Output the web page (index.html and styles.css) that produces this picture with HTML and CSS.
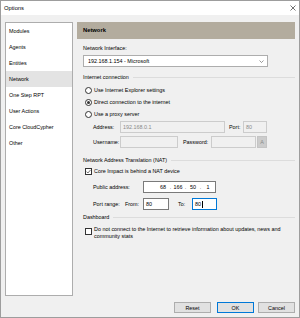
FILE: index.html
```html
<!DOCTYPE html>
<html lang="en">
<head>
    <meta charset="UTF-8">
    <title>Options</title>
    <link rel="stylesheet" href="styles.css">
</head>
<body>
    <div class="window">
        <div class="titlebar">
            <span>Options</span>
            <svg class="close" width="6" height="6" viewBox="0 0 6 6"><path d="M0.5 0.5L5.5 5.5M5.5 0.5L0.5 5.5" stroke="#333" stroke-width="0.7"/></svg>
        </div>

        <div class="main">
            <ul class="nav">
                <li>Modules</li>
                <li>Agents</li>
                <li>Entities</li>
                <li class="active">Network</li>
                <li>One Step RPT</li>
                <li>User Actions</li>
                <li>Core CloudCypher</li>
                <li>Other</li>
            </ul>

            <div class="panel">
                <div class="panel-head">Network</div>
                <div class="panel-body">
                    <div class="caption">Network Interface:</div>
                    <div class="select">
                        <span>192.168.1.154 - Microsoft</span>
                        <svg width="5" height="3" viewBox="0 0 5 3"><path d="M0.5 0.5L2.5 2.5L4.5 0.5" fill="none" stroke="#555" stroke-width="0.6"/></svg>
                    </div>

                    <div class="legend">Internet connection</div>
                    <div class="option first"><span class="radio"></span>Use Internet Explorer settings</div>
                    <div class="option"><span class="radio on"></span>Direct connection to the internet</div>
                    <div class="option"><span class="radio"></span>Use a proxy server</div>

                    <div class="row proxy-row">
                        <span class="lbl w27">Address:</span>
                        <span class="input disabled w105">192.168.0.1</span>
                        <span class="lbl port-lbl">Port:</span>
                        <span class="input disabled w24">80</span>
                    </div>
                    <div class="row user-row">
                        <span class="lbl w27">Username:</span>
                        <span class="input disabled w58"></span>
                        <span class="lbl pass-lbl">Password:</span>
                        <span class="input disabled w45"></span>
                        <span class="mini-btn">A</span>
                    </div>

                    <div class="legend nat">Network Address Translation (NAT)</div>
                    <div class="option check-row">
                        <span class="checkbox"><svg width="5" height="5" viewBox="0 0 5 5"><path d="M0.5 2.6L1.9 4L4.6 0.9" fill="none" stroke="#333" stroke-width="0.7"/></svg></span>
                        Core Impact is behind a NAT device
                    </div>

                    <div class="row public-row">
                        <span class="lbl w50">Public address:</span>
                        <span class="input ip">
                            <span>68</span><i>.</i><span>166</span><i>.</i><span>50</span><i>.</i><span>1</span>
                        </span>
                    </div>
                    <div class="row range-row">
                        <span class="lbl w32">Port range:</span>
                        <span class="lbl w18">From:</span>
                        <span class="input w26">80</span>
                        <span class="lbl to-lbl">To:</span>
                        <span class="input focus w25">80<b class="caret"></b></span>
                    </div>

                    <div class="legend dash">Dashboard</div>
                    <div class="option multi"><span class="checkbox"></span><span>Do not connect to the Internet to retrieve information about updates, news and<br>community stats</span></div>
                </div>
            </div>
        </div>

        <div class="footer">
            <button class="reset">Reset</button>
            <button class="ok">OK</button>
            <button>Cancel</button>
        </div>
    </div>
</body>
</html>
```

FILE: styles.css
```css
* {
    margin: 0;
    padding: 0;
    box-sizing: border-box;
}

body {
    font-family: "Liberation Sans", Arial, sans-serif;
    font-size: 5.4px;
    color: #000;
    background: #fff;
}

.window {
    width: 300px;
    height: 318px;
    border: 1px solid #9d9d9d;
    background: #f0f0f0;
    display: flex;
    flex-direction: column;
}

.titlebar {
    height: 14px;
    background: #fff;
    display: flex;
    align-items: center;
    justify-content: space-between;
    padding: 0 3px 0 3px;
    font-size: 5.8px;
}

.main {
    display: flex;
    gap: 4px;
    padding: 7px 4px 0 4px;
}

.nav {
    width: 68px;
    height: 274px;
    background: #fff;
    border: 1px solid #adadad;
    list-style: none;
}

.nav li {
    height: 16px;
    line-height: 16px;
    padding-left: 3px;
}

.nav li.active {
    background: #e3e3e3;
}

.panel {
    flex: 1;
}

.panel-head {
    height: 17px;
    line-height: 17px;
    background: #b3ac9e;
    padding-left: 6px;
    font-weight: bold;
    font-size: 5.8px;
}

.panel-body {
    padding-left: 6px;
    display: flex;
    flex-direction: column;
}

.caption {
    margin-top: 6px;
    line-height: 7px;
}

.select {
    margin-top: 3px;
    width: 185px;
    height: 12px;
    background: #fff;
    border: 1px solid #adadad;
    display: flex;
    align-items: center;
    justify-content: space-between;
    padding: 0 3px 0 4px;
}

.legend {
    margin-top: 7px;
    display: flex;
    align-items: center;
    line-height: 7px;
}

.legend::after {
    content: "";
    flex: 1;
    height: 1px;
    background: #dcdcdc;
    margin-left: 4px;
}

.legend.nat {
    margin-top: 9px;
}

.legend.dash {
    margin-top: 4px;
}

.option {
    height: 12px;
    display: flex;
    align-items: center;
    gap: 2px;
    padding-left: 2px;
}

.option.first {
    margin-top: 3px;
}

.radio {
    width: 7px;
    height: 7px;
    border: 1px solid #333;
    border-radius: 50%;
    background: #fff;
    display: flex;
    align-items: center;
    justify-content: center;
}

.radio.on::after {
    content: "";
    width: 3px;
    height: 3px;
    border-radius: 50%;
    background: #333;
}

.checkbox {
    width: 7px;
    height: 7px;
    border: 0.8px solid #333;
    background: #fff;
    display: flex;
    align-items: center;
    justify-content: center;
    flex-shrink: 0;
}

.check-row {
    margin-top: 1px;
}

.multi {
    margin-top: 5px;
    height: auto;
    align-items: flex-start;
    line-height: 7px;
}

.multi .checkbox {
    margin-top: 2px;
}

.row {
    display: flex;
    align-items: center;
    height: 12px;
    padding-left: 10px;
}

.proxy-row {
    margin-top: 1px;
}

.user-row {
    margin-top: 3px;
}

.public-row {
    margin-top: 4px;
}

.range-row {
    margin-top: 5px;
}

.lbl {
    flex-shrink: 0;
    white-space: nowrap;
}

.w18 { width: 18px; }
.w27 { width: 27px; }
.w32 { width: 32px; }
.w50 { width: 50px; }

.port-lbl {
    margin-left: 4px;
    width: 14px;
}

.pass-lbl {
    margin-left: 5px;
    width: 28px;
}

.to-lbl {
    margin-left: 9px;
    width: 14px;
}

.input {
    height: 12px;
    background: #fff;
    border: 1px solid #7a7a7a;
    padding-left: 2px;
    display: flex;
    align-items: center;
}

.input.disabled {
    background: #f0f0f0;
    border-color: #cccccc;
    color: #8a8a8a;
}

.input.focus {
    border-color: #0078d7;
}

.caret {
    width: 0.7px;
    height: 7px;
    background: #000;
    margin-left: 0.5px;
}

.w24 { width: 24px; }
.w25 { width: 25px; }
.w26 { width: 26px; }
.w45 { width: 45px; }
.w58 { width: 58px; }
.w105 { width: 105px; }

.ip {
    width: 73px;
    padding-left: 14px;
}

.ip span {
    width: 10px;
    text-align: center;
}

.ip i {
    font-style: normal;
    width: 5px;
    text-align: center;
}

.mini-btn {
    margin-left: 1px;
    width: 10px;
    height: 12px;
    background: #cccccc;
    border: 1px solid #c4c4c4;
    color: #8a8a8a;
    display: flex;
    align-items: center;
    justify-content: center;
}

.footer {
    display: flex;
    justify-content: flex-end;
    padding: 6px 4px 0 0;
}

.footer button {
    width: 37px;
    height: 11px;
    background: #e1e1e1;
    border: 1px solid #adadad;
    font-family: "Liberation Sans", Arial, sans-serif;
    font-size: 5.4px;
    color: #000;
}

.footer .reset {
    margin-right: 6px;
}

.footer .ok {
    margin-right: 4px;
    border-color: #0078d7;
}
```
